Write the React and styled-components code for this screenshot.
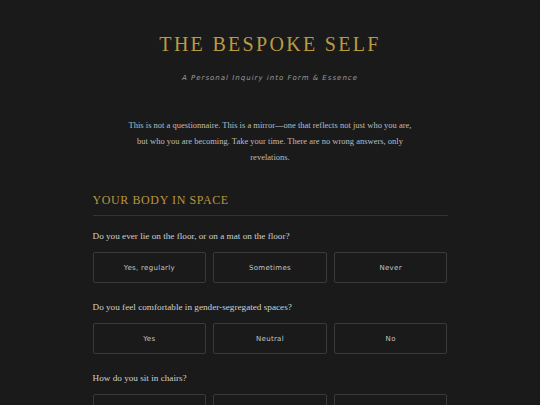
import React, { useState } from 'react';
import styled, { createGlobalStyle } from 'styled-components';

const GlobalStyle = createGlobalStyle`
  html, body {
    margin: 0;
    padding: 0;
    background: #1a1a1a;
  }
  body {
    font-family: "Liberation Serif", serif;
  }
`;

const sections = [
  {
    title: 'Your Body in Space',
    questions: [
      { text: 'Do you ever lie on the floor, or on a mat on the floor?', options: ['Yes, regularly', 'Sometimes', 'Never'] },
      { text: 'Do you feel comfortable in gender-segregated spaces?', options: ['Yes', 'Neutral', 'No'] },
      { text: 'How do you sit in chairs?', options: ['Upright', 'Curled up', 'Sprawled'] },
    ],
  },
];

const App = () => {
  const [answers, setAnswers] = useState({});

  const pick = (q, opt) => setAnswers({ ...answers, [q]: opt });

  return (
    <Page>
      <GlobalStyle />
      <Header>
        <Title>The Bespoke Self</Title>
        <Subtitle>A Personal Inquiry into Form &amp; Essence</Subtitle>
      </Header>
      <Intro>
        This is not a questionnaire. This is a mirror—one that reflects not just who you are,
        but who you are becoming. Take your time. There are no wrong answers, only revelations.
      </Intro>
      {sections.map((section) => (
        <Section key={section.title}>
          <SectionTitle>{section.title}</SectionTitle>
          {section.questions.map((q) => (
            <Question key={q.text}>
              <QuestionText>{q.text}</QuestionText>
              <Options>
                {q.options.map((opt) => (
                  <Option
                    key={opt}
                    $active={answers[q.text] === opt}
                    onClick={() => pick(q.text, opt)}
                  >
                    {opt}
                  </Option>
                ))}
              </Options>
            </Question>
          ))}
        </Section>
      ))}
    </Page>
  );
};

export default App;

// styled-components
const Page = styled.div`
  width: 355px;
  margin: 0 auto;
  padding: 31px 0 40px;
`;

const Header = styled.header`
  display: flex;
  flex-direction: column;
  align-items: center;
`;

const Title = styled.h1`
  margin: 0;
  font-family: "Liberation Serif", serif;
  font-weight: 400;
  font-size: 20px;
  line-height: 26px;
  letter-spacing: 2.3px;
  text-transform: uppercase;
  color: #bb9a42;
`;

const Subtitle = styled.p`
  margin: 16px 0 0;
  font-family: "DejaVu Sans", sans-serif;
  font-style: italic;
  font-size: 7px;
  line-height: 10px;
  letter-spacing: 1px;
  color: #9a9a9a;
`;

const Intro = styled.p`
  margin: 34px auto 0;
  width: 290px;
  text-align: center;
  font-family: "Liberation Serif", serif;
  font-size: 8.5px;
  line-height: 16px;
  color: #bdbdbd;
`;

const Section = styled.section`
  margin-top: 27px;
`;

const SectionTitle = styled.h2`
  margin: 0;
  padding-bottom: 7px;
  border-bottom: 1px solid #333;
  font-family: "Liberation Serif", serif;
  font-weight: 400;
  font-size: 12px;
  line-height: 16px;
  letter-spacing: 0.6px;
  text-transform: uppercase;
  color: #b8963e;
`;

const Question = styled.div`
  margin-top: 14px;
  &:not(:first-of-type) {
    margin-top: 18px;
  }
`;

const QuestionText = styled.p`
  margin: 0 0 10px;
  font-family: "Liberation Serif", serif;
  font-size: 9.2px;
  line-height: 12px;
  color: #cfcfcf;
`;

const Options = styled.div`
  display: grid;
  grid-template-columns: repeat(3, 1fr);
  gap: 7px;
`;

const Option = styled.button`
  height: 31px;
  background: ${(p) => (p.$active ? 'rgba(184, 150, 62, 0.12)' : 'transparent')};
  border: 1px solid ${(p) => (p.$active ? '#b8963e' : '#3a3a3a')};
  border-radius: 2px;
  font-family: "DejaVu Sans", sans-serif;
  font-size: 7px;
  letter-spacing: 0.3px;
  color: ${(p) => (p.$active ? '#d8bb6a' : '#c4c4c4')};
  cursor: pointer;
`;
